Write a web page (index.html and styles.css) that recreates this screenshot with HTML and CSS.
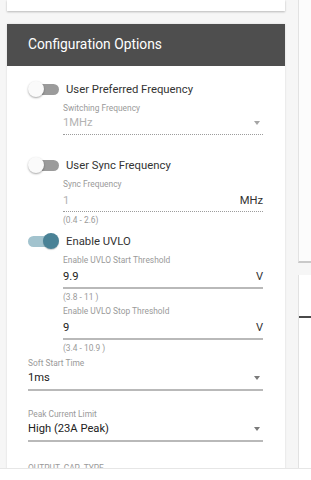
FILE: index.html
```html
<!DOCTYPE html>
<html>
<head>
    <title>Configuration Options</title>
    <meta charset="utf-8">
    <link rel="stylesheet" href="styles.css">
</head>
<body>
    <div class="page">
        <div class="left-col">
            <div class="top-card"></div>
            <div class="panel">
                <div class="panel-head">Configuration Options</div>
                <div class="panel-body">
                    <div class="toggle-row first">
                        <span class="switch"><span class="track"></span><span class="thumb"></span></span>
                        <span class="toggle-label">User Preferred Frequency</span>
                    </div>
                    <div class="field sub select disabled">
                        <div class="field-label">Switching Frequency</div>
                        <div class="field-value"><span>1MHz</span><span class="arrow"></span></div>
                    </div>

                    <div class="toggle-row second">
                        <span class="switch"><span class="track"></span><span class="thumb"></span></span>
                        <span class="toggle-label">User Sync Frequency</span>
                    </div>
                    <div class="field sub input disabled">
                        <div class="field-label">Sync Frequency</div>
                        <div class="field-value"><span>1</span><span class="unit">MHz</span></div>
                        <div class="hint">(0.4 - 2.6)</div>
                    </div>

                    <div class="toggle-row">
                        <span class="switch on"><span class="track"></span><span class="thumb"></span></span>
                        <span class="toggle-label">Enable UVLO</span>
                    </div>
                    <div class="field sub input">
                        <div class="field-label">Enable UVLO Start Threshold</div>
                        <div class="field-value"><span>9.9</span><span class="unit">V</span></div>
                        <div class="hint">(3.8 - 11 )</div>
                    </div>
                    <div class="field sub input next">
                        <div class="field-label">Enable UVLO Stop Threshold</div>
                        <div class="field-value"><span>9</span><span class="unit">V</span></div>
                        <div class="hint">(3.4 - 10.9 )</div>
                    </div>

                    <div class="field select soft">
                        <div class="field-label">Soft Start Time</div>
                        <div class="field-value"><span>1ms</span><span class="arrow"></span></div>
                    </div>
                    <div class="field select spaced">
                        <div class="field-label">Peak Current Limit</div>
                        <div class="field-value"><span>High (23A Peak)</span><span class="arrow"></span></div>
                    </div>
                    <div class="field select last">
                        <div class="field-label">OUTPUT_CAP_TYPE</div>
                        <div class="field-value"><span>&nbsp;</span><span class="arrow"></span></div>
                    </div>
                </div>
            </div>
        </div>
        <div class="right-col">
            <div class="side-card"></div>
            <div class="side-card lower">
                <div class="side-line"></div>
            </div>
        </div>
    </div>
    <div class="bottom-bar"></div>
</body>
</html>
```

FILE: styles.css
```css
*{
    padding: 0;
    margin: 0;
    box-sizing: border-box;
}
body{
    background: #f6f6f6;
    font-family: Roboto, "Liberation Sans", sans-serif;
    height: 480px;
    overflow: hidden;
}
.page{
    display: flex;
    align-items: flex-start;
}
.left-col{
    width: 278px;
    margin-left: 7px;
}
.top-card{
    height: 11px;
    background: #ffffff;
    box-shadow: 0 1px 2px rgba(0,0,0,0.25);
}
.panel{
    margin-top: 13px;
    background: #ffffff;
    box-shadow: 0 0 2px rgba(0,0,0,0.12);
}
.panel-head{
    height: 42px;
    background: #4e4e4e;
    color: #ffffff;
    font-size: 13.8px;
    line-height: 41px;
    padding-left: 21px;
}
.panel-body{
    padding: 0 22px 40px 21px;
}

/* toggles */
.toggle-row{
    display: flex;
    align-items: center;
    height: 18px;
    margin-top: 6px;
}
.toggle-row.first{
    margin-top: 14px;
}
.toggle-row.second{
    margin-top: 21px;
}
.switch{
    position: relative;
    width: 31px;
    height: 18px;
    margin-right: 7px;
}
.track{
    position: absolute;
    left: 4px;
    top: 3.5px;
    width: 27px;
    height: 11px;
    border-radius: 6px;
    background: #9b9b9b;
}
.thumb{
    position: absolute;
    left: 0;
    top: 1px;
    width: 16px;
    height: 16px;
    border-radius: 50%;
    background: #fafafa;
    box-shadow: 0 1px 2px rgba(0,0,0,0.35);
}
.switch.on .track{
    left: 0;
    background: #a2c3ce;
}
.switch.on .thumb{
    left: 15px;
    background: #4a8296;
    box-shadow: 0 1px 1px rgba(0,0,0,0.2);
}
.toggle-label{
    font-size: 11.3px;
    color: #333333;
}

/* fields */
.field{
    margin-top: 5px;
}
.field.sub{
    margin-left: 35px;
}
.field.next{
    margin-top: 3px;
}
.field.soft{
    margin-top: 4px;
}
.field.spaced{
    margin-top: 18px;
}
.field.last{
    margin-top: 21px;
}
.field-label{
    font-size: 8.4px;
    line-height: 11px;
    color: #9a9a9a;
}
.field-value{
    display: flex;
    justify-content: space-between;
    align-items: center;
    font-size: 11.2px;
    line-height: 16px;
    color: #222222;
    border-bottom: 2px solid #b9b9b9;
}
.select .field-value{
    margin-top: 1px;
    padding-bottom: 3px;
}
.input .field-value{
    margin-top: 3px;
    padding-bottom: 2px;
}
.disabled .field-value{
    color: #b3b3b3;
    border-bottom: 1px dotted #9c9c9c;
}
.unit{
    color: #333333;
}
.arrow{
    width: 0;
    height: 0;
    margin-right: 3px;
    border-left: 3.5px solid transparent;
    border-right: 3.5px solid transparent;
    border-top: 4px solid #7a7a7a;
}
.disabled .arrow{
    border-top-color: #a5a5a5;
}
.hint{
    margin-top: 3px;
    font-size: 8.4px;
    line-height: 11px;
    color: #9a9a9a;
}

/* right column */
.right-col{
    margin-left: 13px;
    flex: 1;
}
.side-card{
    height: 263px;
    background: #fcfcfc;
    border-left: 1px solid #e2e2e2;
    border-bottom: 2px solid #c9c9c9;
}
.side-card.lower{
    height: 220px;
    margin-top: 12px;
    border-bottom: 0;
    padding-top: 41px;
    background: #ffffff;
}
.side-line{
    height: 2px;
    background: #4a4a4a;
}

.bottom-bar{
    position: fixed;
    left: 0;
    right: 0;
    bottom: 0;
    height: 12px;
    background: #ffffff;
    border-top: 1px solid #e6e6e6;
}
```
